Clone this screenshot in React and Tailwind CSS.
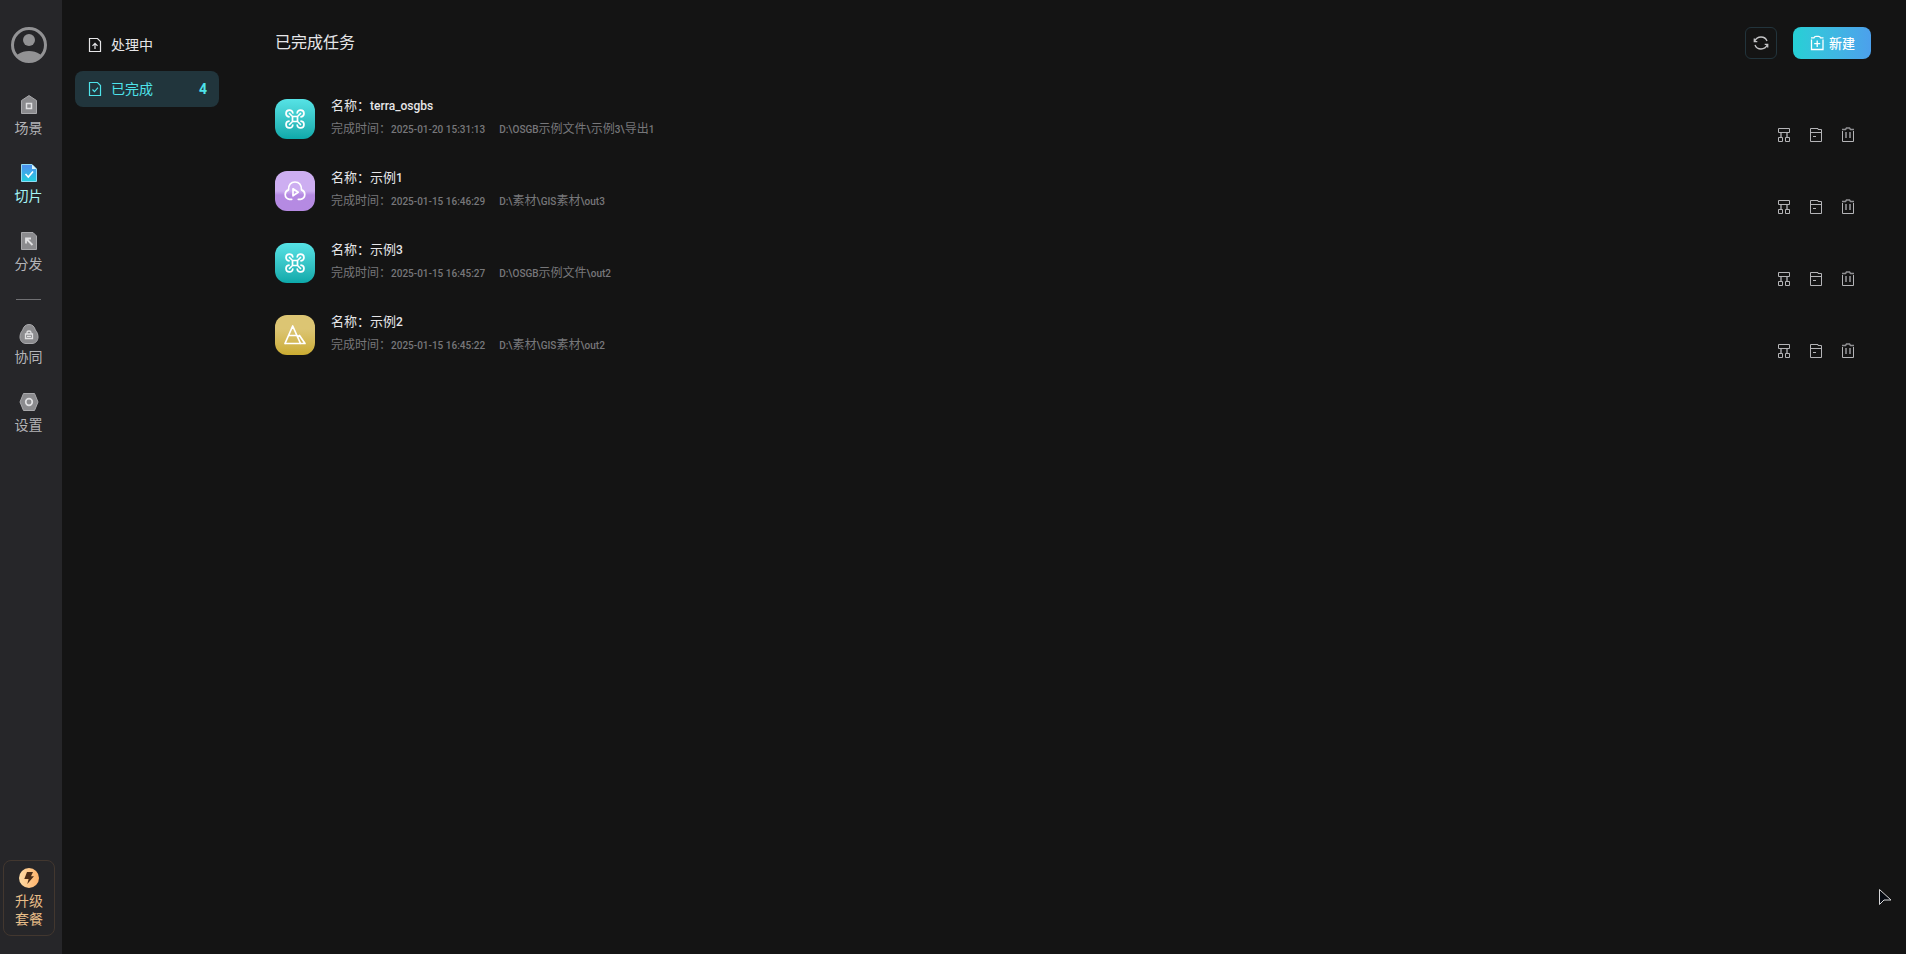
const tasks = [
  { id: 1, type: "drone", name: "terra_osgbs", time: "2025-01-20 15:31:13", path: "D:\\OSGB示例文件\\示例3\\导出1" },
  { id: 2, type: "cloud", name: "示例1", time: "2025-01-15 16:46:29", path: "D:\\素材\\GIS素材\\out3" },
  { id: 3, type: "drone", name: "示例3", time: "2025-01-15 16:45:27", path: "D:\\OSGB示例文件\\out2" },
  { id: 4, type: "terrain", name: "示例2", time: "2025-01-15 16:45:22", path: "D:\\素材\\GIS素材\\out2" },
];

const AvatarIcon = () => (
  <svg className="size-9" viewBox="0 0 36 36" fill="none">
    <clipPath id="avatar">
      <circle cx="18" cy="18" r="17" />
    </clipPath>
    <g clipPath="url(#avatar)" fill="#929294">
      <circle cx="18" cy="13" r="6" />
      <ellipse cx="18" cy="34" rx="15" ry="10" />
    </g>
    <circle cx="18" cy="18" r="16.5" stroke="#929294" strokeWidth="3" />
  </svg>
);

const SceneIcon = () => (
  <svg className="size-5" viewBox="0 0 20 20" fill="none">
    <path d="M2.5 5.5 10 .6l7.5 4.900v13h-15z" fill="#8b8b8e" stroke="#a9a9ac" />
    <path d="M7.5 8.500h5v5h-5z" stroke="#e0e0e2" strokeWidth="1.5" />
  </svg>
);

const SliceIcon = () => (
  <svg className="size-5" viewBox="0 0 20 20" fill="none">
    <defs>
      <linearGradient id="slice" x1="0" y1="0" x2="0" y2="1">
        <stop offset="0.1" stopColor="#4c94ef" />
        <stop offset="1" stopColor="#22cfdc" />
      </linearGradient>
    </defs>
    <path d="M2.5 1.5H13L17.5 6v12.5h-15z" fill="url(#slice)" stroke="#8fdcf3" />
    <path d="M13 1.5V6h4.5z" fill="#d9f6fb" />
    <path d="m6.500 11 2.800 3 4.700-5.500" stroke="#fff" strokeWidth="1.600" />
  </svg>
);

const ShareIcon = () => (
  <svg className="size-5" viewBox="0 0 20 20" fill="none">
    <path d="M2.5 1.5H14L17.5 5v13.5h-15z" fill="#8b8b8e" stroke="#a9a9ac" strokeLinejoin="round" />
    <path d="M7 12.5v-5h5M7.500 8l6 6" stroke="#e0e0e2" strokeWidth="1.800" />
  </svg>
);

const TeamIcon = () => (
  <svg className="size-5" viewBox="0 0 20 20" fill="none">
    <path
      d="M10 .5c3.500 0 5.500 2.300 6.300 5.500 1.700 1.900 2.700 4.300 2.700 7 0 4-2.700 6.500-6 6.500H7c-3.300 0-6-2.500-6-6.500 0-2.700 1-5.100 2.700-7C4.500 2.800 6.500.5 10 .5z"
      fill="#8b8b8e"
      stroke="#a9a9ac"
    />
    <path d="M6.500 10h7v4.500h-7zM8 10V8.500Q8 7 10 7t2 1.500V10M8 12.300h4" stroke="#e0e0e2" strokeWidth="1.300" />
  </svg>
);

const SettingsIcon = () => (
  <svg className="size-5" viewBox="0 0 20 20" fill="none">
    <path d="M4.500 1.500h11L19 10l-3.500 8.500h-11L1 10z" fill="#8b8b8e" stroke="#a9a9ac" strokeLinejoin="round" />
    <circle cx="10" cy="10" r="3.300" stroke="#e0e0e2" strokeWidth="1.700" />
  </svg>
);

const BoltIcon = () => (
  <svg className="size-5" viewBox="0 0 20 20">
    <defs>
      <linearGradient id="bolt" x1="0" x2="1">
        <stop offset="0" stopColor="#ffdca6" />
        <stop offset="1" stopColor="#ffb36b" />
      </linearGradient>
    </defs>
    <circle cx="10" cy="10" r="10" fill="url(#bolt)" />
    <path d="M8 4h6l-2 4.300h3L8.300 16l1.300-5H5.300z" fill="#4a2c17" />
  </svg>
);

const FileIcon = ({ done }) => (
  <svg className="h-4 w-3.5" viewBox="0 0 14 16" fill="none" stroke="currentColor" strokeWidth="1.200">
    <path d="M1.500 1.500h8l3 3v10h-11z" />
    {done ? <path d="m4.500 8.500 2 2.200 3.500-4" /> : <path d="M7 12V6.500M4.500 8.800 7 6.300l2.500 2.500" />}
  </svg>
);

const RefreshIcon = () => (
  <svg className="size-4" viewBox="0 0 16 16" fill="none" stroke="#c4c4c6" strokeWidth="1.300">
    <path d="M1.500 6.500Q3.500 2 8 2q4.500 0 6 4M14.500 9.500Q12.500 14 8 14q-4.500 0-6-4" />
    <path d="M1.300 3.500v3.200h3M14.700 12.500V9.300h-3" />
  </svg>
);

const NewIcon = () => (
  <svg className="size-4" viewBox="0 0 16 16" fill="none" stroke="#fff" strokeWidth="1.300">
    <path d="M2.500 4.500v10h11.500v-10M2 2.800h3q.5-1.500 2-1.500h2.500q1.500 0 2 1.500h3M8.200 5.500v6.500M5.200 8.700h6" />
  </svg>
);

const TreeIcon = () => (
  <svg className="size-4" viewBox="0 0 16 16" fill="none" stroke="#b4b4b7">
    <path d="M2.500 1.500h11v4h-11zM2.500 10.500h4v4h-4zM9.500 10.500h4v4h-4z" />
    <path d="M5 6v4M11 6v4" stroke="#7c7c7f" strokeWidth="2" />
  </svg>
);

const FolderIcon = () => (
  <svg className="size-4" viewBox="0 0 16 16" fill="none" stroke="#b4b4b7">
    <path d="M2.500 1.500h7.500v1h3.500v12h-11zM2.500 5.500h11M5 9.500h3" />
  </svg>
);

const TrashIcon = () => (
  <svg className="size-4" viewBox="0 0 16 16" fill="none" stroke="#b4b4b7">
    <path d="M2.500 4v10.500h11V4" />
    <path d="M2 2.500h3.500l1-1.500h3l1 1.500H14" stroke="#8f8f92" strokeWidth="1.500" />
    <path d="M6 5v6M10 5v6" stroke="#77777a" strokeWidth="2" />
  </svg>
);

const typeStyles = {
  drone: "bg-linear-to-b from-[#56e3e6] to-[#0ba9aa]",
  cloud: "bg-linear-to-b from-[#cdaef1] from-50% to-[#b58ae2] to-60%",
  terrain: "bg-linear-to-b from-[#dcc573] from-35% to-[#cbac30]",
};

const TypeIcon = ({ type }) => (
  <span className={`flex size-10 shrink-0 items-center justify-center rounded-xl ${typeStyles[type]}`}>
    <svg className="size-6" viewBox="0 0 24 24" fill="none" stroke="#fff" strokeWidth="1.700" strokeLinejoin="round" strokeLinecap="round">
      {type === "drone" && (
        <>
          <path d="M9.500 9.500h5v5h-5zM9.500 9.500l-3-3M14.500 9.500l3-3M9.500 14.500l-3 3M14.500 14.500l3 3" />
          <path d="M6 9.800A3.400 3.400 0 1 1 9.800 6M14.200 6A3.400 3.400 0 1 1 18 9.800M6 14.200A3.400 3.400 0 1 0 9.800 18M14.200 18A3.400 3.400 0 1 0 18 14.200" />
        </>
      )}
      {type === "cloud" && (
        <>
          <path d="M8.700 20.300H6.500a5 5 0 0 1-4.300-4.800c0-2.300 1.300-3.900 3.300-4.600C5.300 5.700 8 3 12 3s6.700 2.700 6.500 7.900c2 .7 3.300 2.300 3.300 4.600a5 5 0 0 1-4.300 4.800h-2.200" />
          <path d="M10 9.800v7l5.200-3.500z" />
        </>
      )}
      {type === "terrain" && <path d="M2 20.500 9.700 3l7.800 17.500M2 20.500h20l-5.500-8-2 1.500M6.500 12.500h7" />}
    </svg>
  </span>
);

// latin runs are set in Roboto, a step smaller than the Chinese around them
const MixedText = ({ text, latin }) =>
  text.split(/([\x20-\x7e]+)/).map((part, i) =>
    i % 2 ? (
      <span key={i} className={`font-[Roboto] font-medium ${latin}`}>
        {part}
      </span>
    ) : (
      part
    )
  );

const NavItem = ({ icon, label, active }) => (
  <button
    className={`flex h-[68px] w-full flex-col items-center gap-0.5 text-sm leading-5 ${active ? "text-[#a5f5f7]" : "text-[#b4b4b7]"}`}
  >
    {icon}
    {label}
  </button>
);

const Sidebar = () => (
  <aside className="flex w-[62px] shrink-0 flex-col items-center bg-[#262629] pt-[27px] pr-1 pb-[18px]">
    <button aria-label="账号">
      <AvatarIcon />
    </button>
    <nav className="mt-8 flex w-full flex-col items-center pr-px">
      <NavItem icon={<SceneIcon />} label="场景" />
      <NavItem icon={<SliceIcon />} label="切片" active />
      <NavItem icon={<ShareIcon />} label="分发" />
      <hr className="mb-6 w-[25px] border-[#707073]" />
      <NavItem icon={<TeamIcon />} label="协同" />
      <NavItem icon={<SettingsIcon />} label="设置" />
    </nav>
    <button className="mt-auto flex h-[76px] w-[52px] flex-col items-center rounded-lg border border-[#42372f] pt-[7px] text-sm leading-[18px] text-[#e6bd88]">
      <BoltIcon />
      <span className="mt-[3px]">升级</span>
      <span>套餐</span>
    </button>
  </aside>
);

const StatusTabs = () => (
  <nav className="flex w-[170px] shrink-0 flex-col gap-2 px-[13px] pt-[27px] text-sm">
    <button className="flex h-9 items-center gap-[9px] rounded-lg px-[13px] text-[#e6e6e8]">
      <FileIcon />
      <span className="pb-0.5">处理中</span>
    </button>
    <button className="flex h-9 items-center gap-[9px] rounded-lg bg-[#21353c] pr-3 pl-[13px] text-[#4ee3ea]">
      <FileIcon done />
      <span className="pb-0.5">已完成</span>
      <span className="ml-auto font-[Roboto] text-sm font-bold">4</span>
    </button>
  </nav>
);

const TaskRow = ({ task }) => (
  <li className="flex h-[72px] pr-[15px]">
    <div className="flex grow gap-4 pt-4">
      <TypeIcon type={task.type} />
      <div>
        <p className="text-[13px] leading-3 text-[#e6e6e8]">
          名称：
          <MixedText text={task.name} latin="text-xs leading-3" />
        </p>
        <p className="mt-2.5 flex gap-3.5 text-xs leading-3 text-[#77777a]">
          <span>
            完成时间：
            <MixedText text={task.time} latin="text-[10px] leading-3" />
          </span>
          <span>
            <MixedText text={task.path} latin="text-[10px] leading-3" />
          </span>
        </p>
      </div>
    </div>
    <div className="flex gap-4 self-end pb-3">
      <button aria-label="层级">
        <TreeIcon />
      </button>
      <button aria-label="打开文件夹">
        <FolderIcon />
      </button>
      <button aria-label="删除">
        <TrashIcon />
      </button>
    </div>
  </li>
);

export default function App() {
  return (
    <div className="relative flex min-h-screen bg-[#141414] font-['Noto_Sans_CJK_SC',sans-serif]">
      <Sidebar />
      <StatusTabs />
      <main className="grow pt-[27px] pr-[35px] pl-[43px]">
        <header className="flex items-center gap-4">
          <h1 className="grow self-start text-base leading-7 text-[#e6e6e8]">已完成任务</h1>
          <button
            aria-label="刷新"
            className="flex size-8 items-center justify-center rounded-md border border-[#22343c]"
          >
            <RefreshIcon />
          </button>
          <button className="flex h-8 w-[78px] items-center justify-center gap-1 rounded-lg bg-linear-to-r from-[#25d0d5] to-[#4ca0ec] text-[13px] font-medium text-white">
            <NewIcon />
            新建
          </button>
        </header>
        <ul className="mt-6">
          {tasks.map((task) => (
            <TaskRow key={task.id} task={task} />
          ))}
        </ul>
      </main>
      <svg className="pointer-events-none absolute right-[13px] bottom-12 h-[18px] w-[15px]" viewBox="0 0 15 18">
        <path d="M1.500 1.500v15l4.500-4.500h7z" fill="#060a12" stroke="#d8d8da" />
      </svg>
    </div>
  );
}
